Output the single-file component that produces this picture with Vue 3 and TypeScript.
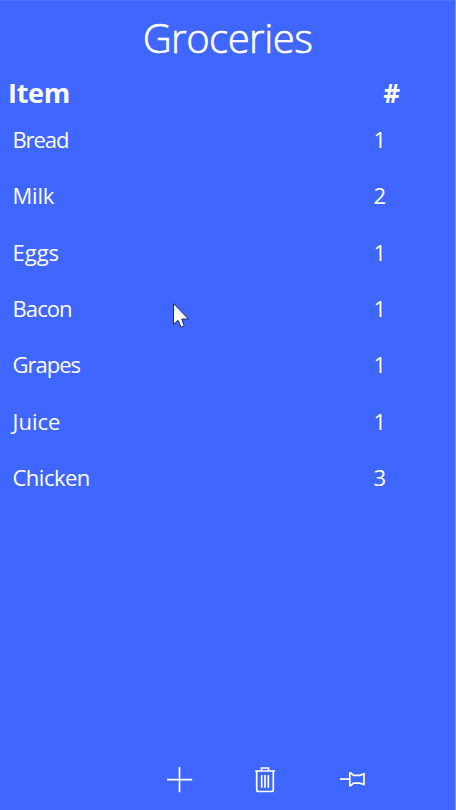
<template>
  <div class="page">
    <h1 class="title">Groceries</h1>

    <div class="header">
      <span class="header-item">Item</span>
      <span class="header-count">#</span>
    </div>

    <ul class="list">
      <li v-for="item in items" :key="item.name" class="row">
        <span class="name" :class="item.name.toLowerCase()">{{ item.name }}</span>
        <span class="count">{{ item.count }}</span>
      </li>
    </ul>

    <div class="toolbar">
      <button type="button" aria-label="Add">
        <svg width="30" height="30" viewBox="0 0 30 30">
          <path d="M14.5 2V27.2M2 14.6H27.2" />
        </svg>
      </button>
      <button type="button" aria-label="Delete">
        <svg width="30" height="30" viewBox="0 0 30 30">
          <path d="M4 6H24M10.5 6V3H17.5V6M5.7 6V24.8Q5.7 26.5 7.5 26.5H20.5Q22.3 26.5 22.3 24.8V6" />
          <path d="M10.7 10V22.8M14 10V22.8M17.3 10V22.8" />
        </svg>
      </button>
      <button type="button" aria-label="Pin">
        <svg width="30" height="30" viewBox="0 0 30 30">
          <path d="M3 14.1H12.8M12.8 7.8V20.6H13.6L16.6 18.1H22.5L27 19.3V8.9L22.5 10.3H16.6L13.6 7.8Z" />
        </svg>
      </button>
    </div>

    <svg class="cursor" width="18" height="27" viewBox="0 0 18 27">
      <path d="M1.5 1.5V22.5L6 18.3L9.2 25.2L12.2 23.8L9.7 17H16.4Z" />
    </svg>
  </div>
</template>

<script setup lang="ts">
import { ref } from 'vue'

interface GroceryItem {
  name: string
  count: number
}

const items = ref<GroceryItem[]>([
  { name: 'Bread', count: 1 },
  { name: 'Milk', count: 2 },
  { name: 'Eggs', count: 1 },
  { name: 'Bacon', count: 1 },
  { name: 'Grapes', count: 1 },
  { name: 'Juice', count: 1 },
  { name: 'Chicken', count: 3 }
])
</script>

<style>
body {
  margin: 0;
}
</style>

<style scoped>
.page {
  position: relative;
  display: flex;
  flex-direction: column;
  box-sizing: border-box;
  height: 810px;
  overflow: hidden;
  border-top: 1px solid #4e72fc;
  border-right: 1px solid #7f98fb;
  background: #3f66ff;
  color: #fff;
  font-family: 'Open Sans', 'Noto Sans', sans-serif;
}

.title {
  margin: 0;
  height: 74px;
  line-height: 73px;
  font-size: 40px;
  font-weight: 300;
  letter-spacing: -0.5px;
  text-align: center;
  -webkit-text-stroke: 0.6px #fff;
}

.header {
  display: flex;
  justify-content: space-between;
  height: 36px;
  padding: 0 55px 0 8px;
  line-height: 36px;
  font-size: 27px;
  font-weight: 700;
}

.header-item {
  letter-spacing: -0.3px;
}

.header-count {
  font-size: 26px;
  line-height: 36px;
}

.list {
  margin: 0;
  padding: 0;
  list-style: none;
}

.row {
  display: flex;
  justify-content: space-between;
  height: 56.35px;
  padding: 0 69px 0 12.5px;
  line-height: 56px;
  font-size: 22px;
}

.bread {
  letter-spacing: -1.1px;
}

.milk {
  letter-spacing: -0.2px;
}

.bacon {
  letter-spacing: -0.9px;
}

.grapes {
  letter-spacing: -1px;
}

.chicken {
  letter-spacing: -0.5px;
}

.toolbar {
  display: flex;
  gap: 56px;
  margin-top: auto;
  padding: 0 0 15px 165px;
}

.toolbar button {
  display: block;
  padding: 0;
  border: 0;
  background: none;
}

.toolbar svg {
  display: block;
  fill: none;
  stroke: #fff;
  stroke-width: 1.7;
}

.cursor {
  position: absolute;
  top: 301px;
  left: 172px;
  fill: #fff;
  stroke: #1c2a60;
  stroke-width: 1;
}
</style>
